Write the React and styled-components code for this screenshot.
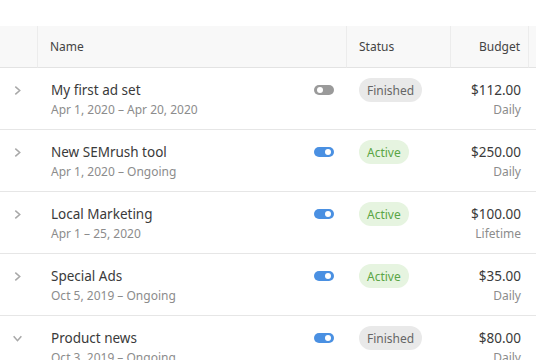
import styled, { createGlobalStyle } from "styled-components";

const rows = [
  { name: "My first ad set", dates: "Apr 1, 2020 – Apr 20, 2020", on: false, status: "Finished", amount: "$112.00", period: "Daily" },
  { name: "New SEMrush tool", dates: "Apr 1, 2020 – Ongoing", on: true, status: "Active", amount: "$250.00", period: "Daily" },
  { name: "Local Marketing", dates: "Apr 1 – 25, 2020", on: true, status: "Active", amount: "$100.00", period: "Lifetime" },
  { name: "Special Ads", dates: "Oct 5, 2019 – Ongoing", on: true, status: "Active", amount: "$35.00", period: "Daily" },
  { name: "Product news", dates: "Oct 3, 2019 – Ongoing", on: true, status: "Finished", amount: "$80.00", period: "Daily", open: true },
];

export default function App() {
  return (
    <>
      <GlobalStyle />
      <Page>
        <Table>
          <HeaderRow>
            <HeadCell />
            <HeadCell>Name</HeadCell>
            <HeadCell>Status</HeadCell>
            <HeadCell $right>Budget</HeadCell>
            <HeadCell $last />
          </HeaderRow>
          {rows.map((r) => (
            <Row key={r.name}>
              <ExpandCell>
                <Chevron $open={r.open} viewBox="0 0 10 10">
                  <path d="M3 1.5 L7 5 L3 8.5" />
                </Chevron>
              </ExpandCell>
              <NameCell>
                <NameBlock>
                  <Title>{r.name}</Title>
                  <Sub>{r.dates}</Sub>
                </NameBlock>
                <Toggle $on={r.on}>
                  <Knob $on={r.on} />
                </Toggle>
              </NameCell>
              <StatusCell>
                <Badge $active={r.status === "Active"}>{r.status}</Badge>
              </StatusCell>
              <BudgetCell>
                <Amount>{r.amount}</Amount>
                <Sub>{r.period}</Sub>
              </BudgetCell>
              <Cell />
            </Row>
          ))}
        </Table>
      </Page>
    </>
  );
}

const GlobalStyle = createGlobalStyle`
  html, body {
    margin: 0;
    padding: 0;
    background: #ffffff;
    overflow: hidden;
  }
  body {
    font-family: "Noto Sans", "Open Sans", sans-serif;
    color: #333;
  }
`;

const Page = styled.div`
  width: 536px;
  height: 360px;
  padding-top: 26px;
  box-sizing: border-box;
  overflow: hidden;
`;

const Table = styled.div`
  display: grid;
  grid-template-columns: 38px 309px 104px 78px 1fr;
`;

const HeaderRow = styled.div`
  display: contents;
`;

const HeadCell = styled.div`
  height: 42px;
  box-sizing: border-box;
  background: #f8f8f8;
  border-bottom: 1px solid #e3e3e3;
  border-right: ${(p) => (p.$last ? "none" : "1px solid #ececec")};
  display: flex;
  align-items: center;
  justify-content: ${(p) => (p.$right ? "flex-end" : "flex-start")};
  padding: ${(p) => (p.$right ? "0 8px 0 0" : "0 0 0 12px")};
  font-size: 12px;
  color: #444;
`;

const Row = styled.div`
  display: contents;
`;

const Cell = styled.div`
  height: 62px;
  box-sizing: border-box;
  border-bottom: 1px solid #e6e6e6;
  display: flex;
  align-items: flex-start;
  padding-top: 11px;
`;

const ExpandCell = styled(Cell)`
  padding-left: 12px;
  padding-top: 17px;
`;

const Chevron = styled.svg`
  width: 11px;
  height: 11px;
  transform: ${(p) => (p.$open ? "rotate(90deg)" : "none")};

  path {
    fill: none;
    stroke: #a8a8a8;
    stroke-width: 1.4;
  }
`;

const NameCell = styled(Cell)`
  justify-content: space-between;
  padding: 13px 13px 0 13px;
`;

const NameBlock = styled.div`
  display: flex;
  flex-direction: column;
  gap: 3px;
`;

const Title = styled.div`
  font-size: 13.5px;
  line-height: 18px;
  color: #3a3a3a;
`;

const Sub = styled.div`
  font-size: 12px;
  line-height: 16px;
  color: #8c8c8c;
`;

const Toggle = styled.div`
  width: 20px;
  height: 10px;
  border-radius: 5px;
  background: ${(p) => (p.$on ? "#4a90e2" : "#9a9a9a")};
  position: relative;
  margin-top: 4px;
`;

const Knob = styled.div`
  position: absolute;
  top: 2px;
  left: ${(p) => (p.$on ? "11px" : "3px")};
  width: 6px;
  height: 6px;
  border-radius: 50%;
  background: #fff;
`;

const StatusCell = styled(Cell)`
  padding-left: 12px;
  padding-top: 10px;
`;

const Badge = styled.span`
  display: inline-flex;
  align-items: center;
  height: 24px;
  padding: 0 8px;
  border-radius: 12px;
  font-size: 12px;
  background: ${(p) => (p.$active ? "#e6f4e0" : "#e9e9e9")};
  color: ${(p) => (p.$active ? "#5aa545" : "#666")};
`;

const BudgetCell = styled(Cell)`
  flex-direction: column;
  align-items: flex-end;
  padding: 13px 8px 0 0;
  gap: 3px;
`;

const Amount = styled.div`
  font-size: 13.5px;
  line-height: 18px;
  color: #3a3a3a;
`;
